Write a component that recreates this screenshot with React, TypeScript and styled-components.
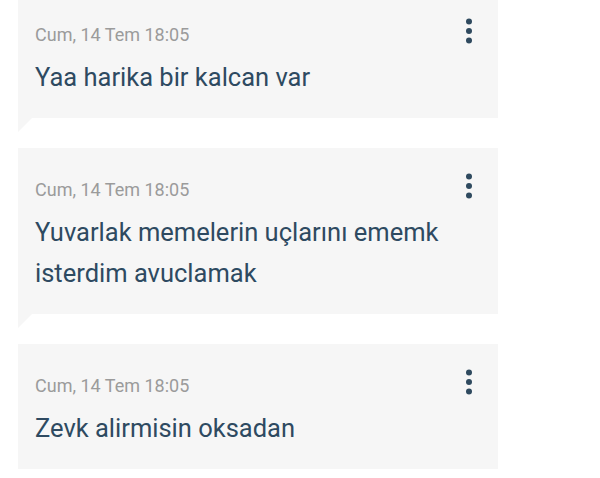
import React from 'react'
import styled, { createGlobalStyle } from 'styled-components'

const messages = [
  { id: 1, date: 'Cum, 14 Tem 18:05', text: 'Yaa harika bir kalcan var', tail: true },
  {
    id: 2,
    date: 'Cum, 14 Tem 18:05',
    text: 'Yuvarlak memelerin uçlarını ememk isterdim avuclamak',
    tail: true,
  },
  { id: 3, date: 'Cum, 14 Tem 18:05', text: 'Zevk alirmisin oksadan', tail: false },
]

export default function App() {
  return (
    <>
      <GlobalStyle />
      <MessageList>
        {messages.map((m) => (
          <Bubble key={m.id} $tail={m.tail}>
            <Header>
              <DateLabel>{m.date}</DateLabel>
              <MenuButton aria-label="Seçenekler">
                <svg width="12" height="26" viewBox="0 0 12 26">
                  <circle cx="6" cy="3.5" r="3" />
                  <circle cx="6" cy="13" r="3" />
                  <circle cx="6" cy="22.5" r="3" />
                </svg>
              </MenuButton>
            </Header>
            <Text>{m.text}</Text>
          </Bubble>
        ))}
      </MessageList>
    </>
  )
}

const GlobalStyle = createGlobalStyle`
  html, body {
    margin: 0;
    background: #ffffff;
    font-family: Roboto, "Noto Sans", Arial, sans-serif;
    overflow: hidden;
  }
`

const MessageList = styled.div`
  display: flex;
  flex-direction: column;
  gap: 30px;
  width: 480px;
  margin-top: -7px;
  padding-left: 18px;
`

const Bubble = styled.div<{ $tail: boolean }>`
  position: relative;
  background: #f6f6f6;
  padding: 25px 23px 20px 17px;

  &::after {
    content: '';
    display: ${(p) => (p.$tail ? 'block' : 'none')};
    position: absolute;
    left: 0;
    top: 100%;
    width: 0;
    height: 0;
    border-top: 14px solid #f6f6f6;
    border-right: 14px solid transparent;
  }
`

const Header = styled.div`
  display: flex;
  justify-content: space-between;
  align-items: flex-start;
`

const DateLabel = styled.div`
  margin-top: 5px;
  font-size: 18px;
  line-height: 24px;
  color: #9b9b9b;
`

const MenuButton = styled.button`
  display: flex;
  padding: 0;
  border: 0;
  background: none;
  cursor: pointer;
  fill: #2f4a5f;
`

const Text = styled.p`
  margin: 10px 0 0;
  font-size: 25.5px;
  line-height: 41px;
  color: #2e4a61;
`
